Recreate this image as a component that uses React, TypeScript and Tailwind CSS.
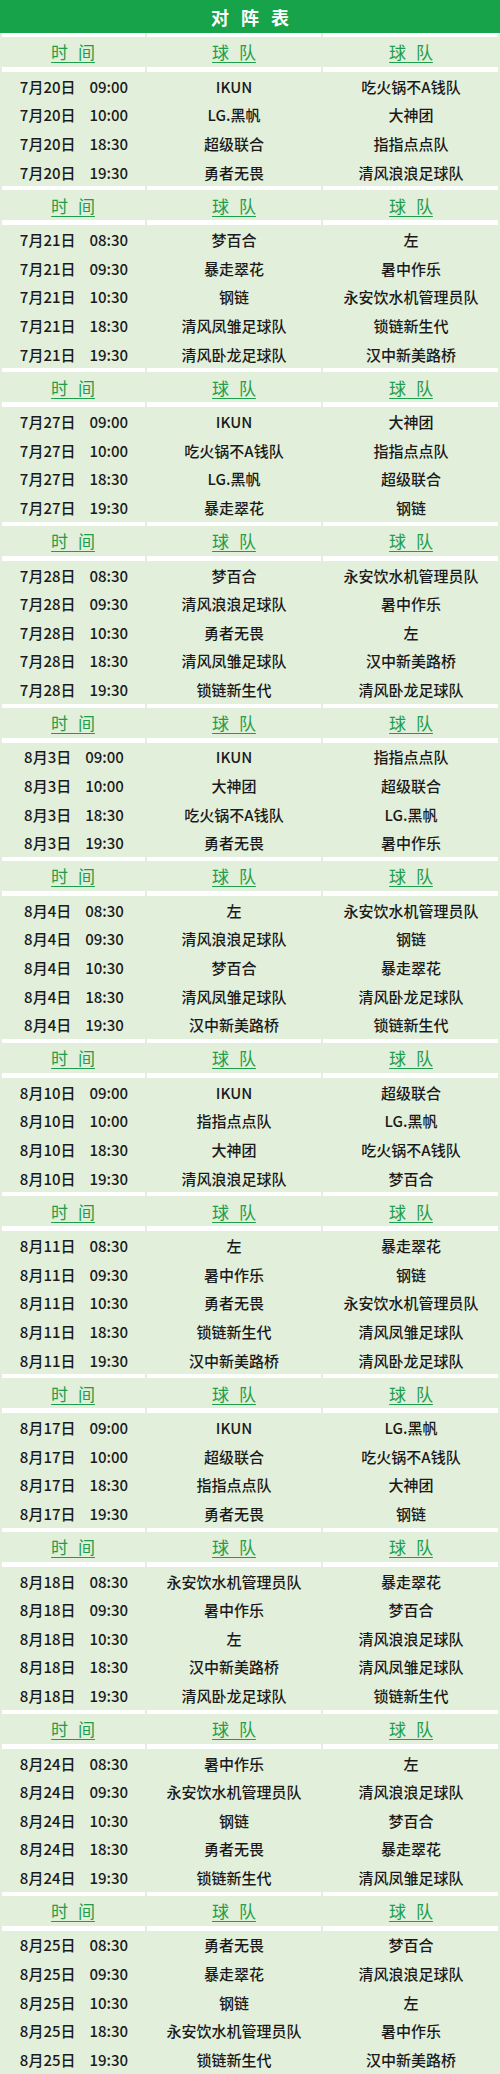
import React from "react";

type Row = [string, string, string, string];

const blocks: { date: string; rows: [string, string, string][] }[] = [
  {
    date: "7月20日",
    rows: [
      ["09:00", "IKUN", "吃火锅不A钱队"],
      ["10:00", "LG.黑帆", "大神团"],
      ["18:30", "超级联合", "指指点点队"],
      ["19:30", "勇者无畏", "清风浪浪足球队"],
    ],
  },
  {
    date: "7月21日",
    rows: [
      ["08:30", "梦百合", "左"],
      ["09:30", "暴走翠花", "暑中作乐"],
      ["10:30", "钢链", "永安饮水机管理员队"],
      ["18:30", "清风凤雏足球队", "锁链新生代"],
      ["19:30", "清风卧龙足球队", "汉中新美路桥"],
    ],
  },
  {
    date: "7月27日",
    rows: [
      ["09:00", "IKUN", "大神团"],
      ["10:00", "吃火锅不A钱队", "指指点点队"],
      ["18:30", "LG.黑帆", "超级联合"],
      ["19:30", "暴走翠花", "钢链"],
    ],
  },
  {
    date: "7月28日",
    rows: [
      ["08:30", "梦百合", "永安饮水机管理员队"],
      ["09:30", "清风浪浪足球队", "暑中作乐"],
      ["10:30", "勇者无畏", "左"],
      ["18:30", "清风凤雏足球队", "汉中新美路桥"],
      ["19:30", "锁链新生代", "清风卧龙足球队"],
    ],
  },
  {
    date: "8月3日",
    rows: [
      ["09:00", "IKUN", "指指点点队"],
      ["10:00", "大神团", "超级联合"],
      ["18:30", "吃火锅不A钱队", "LG.黑帆"],
      ["19:30", "勇者无畏", "暑中作乐"],
    ],
  },
  {
    date: "8月4日",
    rows: [
      ["08:30", "左", "永安饮水机管理员队"],
      ["09:30", "清风浪浪足球队", "钢链"],
      ["10:30", "梦百合", "暴走翠花"],
      ["18:30", "清风凤雏足球队", "清风卧龙足球队"],
      ["19:30", "汉中新美路桥", "锁链新生代"],
    ],
  },
  {
    date: "8月10日",
    rows: [
      ["09:00", "IKUN", "超级联合"],
      ["10:00", "指指点点队", "LG.黑帆"],
      ["18:30", "大神团", "吃火锅不A钱队"],
      ["19:30", "清风浪浪足球队", "梦百合"],
    ],
  },
  {
    date: "8月11日",
    rows: [
      ["08:30", "左", "暴走翠花"],
      ["09:30", "暑中作乐", "钢链"],
      ["10:30", "勇者无畏", "永安饮水机管理员队"],
      ["18:30", "锁链新生代", "清风凤雏足球队"],
      ["19:30", "汉中新美路桥", "清风卧龙足球队"],
    ],
  },
  {
    date: "8月17日",
    rows: [
      ["09:00", "IKUN", "LG.黑帆"],
      ["10:00", "超级联合", "吃火锅不A钱队"],
      ["18:30", "指指点点队", "大神团"],
      ["19:30", "勇者无畏", "钢链"],
    ],
  },
  {
    date: "8月18日",
    rows: [
      ["08:30", "永安饮水机管理员队", "暴走翠花"],
      ["09:30", "暑中作乐", "梦百合"],
      ["10:30", "左", "清风浪浪足球队"],
      ["18:30", "汉中新美路桥", "清风凤雏足球队"],
      ["19:30", "清风卧龙足球队", "锁链新生代"],
    ],
  },
  {
    date: "8月24日",
    rows: [
      ["08:30", "暑中作乐", "左"],
      ["09:30", "永安饮水机管理员队", "清风浪浪足球队"],
      ["10:30", "钢链", "梦百合"],
      ["18:30", "勇者无畏", "暴走翠花"],
      ["19:30", "锁链新生代", "清风凤雏足球队"],
    ],
  },
  {
    date: "8月25日",
    rows: [
      ["08:30", "勇者无畏", "梦百合"],
      ["09:30", "暴走翠花", "清风浪浪足球队"],
      ["10:30", "钢链", "左"],
      ["18:30", "永安饮水机管理员队", "暑中作乐"],
      ["19:30", "锁链新生代", "汉中新美路桥"],
    ],
  },
];

function Sep({ h }: { h: string }) {
  return (
    <div className={`grid grid-cols-[146px_176px_1fr] ${h}`}>
      <div className="ml-[2px] mr-[1px] bg-white" />
      <div className="mx-[1px] bg-white" />
      <div className="ml-[1px] mr-[2px] bg-white" />
    </div>
  );
}

function Header() {
  const cls =
    "flex items-center justify-center text-[17px] text-[#1e9e4c] underline underline-offset-[3px] decoration-[1px] [word-spacing:6px]";
  return (
    <div className="grid h-[30px] grid-cols-[146px_176px_1fr]">
      <div className={cls}>时 间</div>
      <div className={cls}>球 队</div>
      <div className={cls}>球 队</div>
    </div>
  );
}

export default function App() {
  return (
    <div
      className="w-[500px] bg-[#e2efda] text-[#1a1a1a]"
      style={{ fontFamily: '"Noto Sans CJK SC", "Noto Sans", sans-serif' }}
    >
      <div className="flex h-[33px] items-center justify-center bg-[#17a34a] pt-[1px] text-[18px] font-bold text-white [word-spacing:8px]">
        对 阵 表
      </div>
      {blocks.map((b, bi) => (
        <div key={bi}>
          <Sep h="h-[4px]" />
          <Header />
          <Sep h="h-[5px]" />
          {b.rows.map((r, ri) => (
            <div
              key={ri}
              className="grid h-[28.6px] grid-cols-[146px_176px_1fr] items-center text-[15px] font-medium leading-none"
            >
              <div className="flex justify-center gap-[14px] pl-[2px]">
                <span>{b.date}</span>
                <span>{r[0]}</span>
              </div>
              <div className="text-center">{r[1]}</div>
              <div className="text-center">{r[2]}</div>
            </div>
          ))}
        </div>
      ))}
    </div>
  );
}
